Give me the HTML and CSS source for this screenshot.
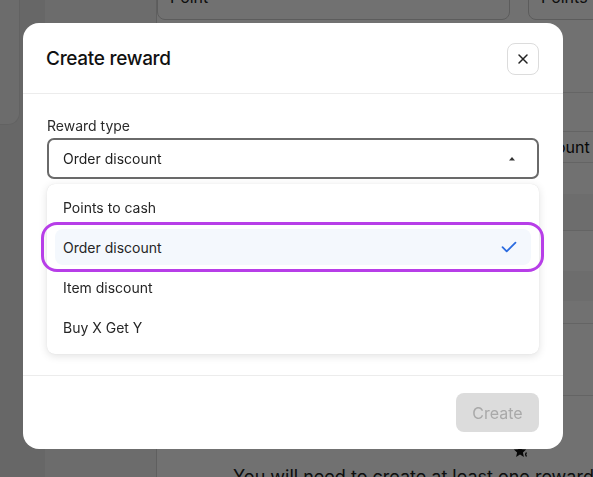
FILE: index.html
```html
<!DOCTYPE html>
<html lang="en">
<head>
<meta charset="utf-8">
<title>Create reward</title>
<link rel="stylesheet" href="styles.css">
</head>
<body>
<div class="page">
  <aside class="rail"><div class="rail-card"></div></aside>
  <nav class="side"></nav>
  <main class="main">
    <div class="fields">
      <div class="field field-wide">Point</div>
      <div class="field">Points</div>
    </div>
    <div class="table">
      <div class="row row-head"></div>
      <div class="row row-label"><span class="cell-text">Discount</span></div>
      <div class="row row-a"></div>
      <div class="row row-band row-b"></div>
      <div class="row row-c"></div>
      <div class="row row-band row-d"></div>
      <div class="row row-e"></div>
      <div class="row row-f"></div>
    </div>
    <div class="empty">
      <svg class="star" width="16" height="16" viewBox="0 0 16 16" aria-hidden="true">
        <path d="M7 1l1.8 4.2 4.4.4-3.3 2.9 1 4.4L7 10.6 3.1 12.9l1-4.4L.8 5.6l4.4-.4z" fill="#111"/>
        <path d="M13.5 8.5a3 3 0 0 0 0 4" fill="none" stroke="#111" stroke-width="1.2"/>
      </svg>
      <p class="empty-text">You will need to create at least one reward</p>
    </div>
  </main>
</div>

<div class="overlay">
  <div class="modal">
    <header class="modal-head">
      <h2 class="modal-title">Create reward</h2>
      <button class="close" type="button" aria-label="Close">
        <svg width="12" height="12" viewBox="0 0 12 12" aria-hidden="true">
          <path d="M2 2l8 8M10 2l-8 8" stroke="#222" stroke-width="1.5" stroke-linecap="round"/>
        </svg>
      </button>
    </header>
    <section class="modal-body">
      <label class="label">Reward type</label>
      <div class="select">
        <span>Order discount</span>
        <svg class="caret" width="8" height="5" viewBox="0 0 8 5" aria-hidden="true"><path d="M1 4.5L4 1l3 3.5z" fill="#333"/></svg>
      </div>
      <ul class="menu">
        <li class="item">Points to cash</li>
        <li class="item item-selected">Order discount
          <svg class="check" width="16" height="12" viewBox="0 0 16 12" aria-hidden="true"><path d="M1.5 6.2l4.2 4.2L14.5 1.6" fill="none" stroke="#2b6be0" stroke-width="1.8" stroke-linecap="round" stroke-linejoin="round"/></svg>
          <span class="highlight"></span>
        </li>
        <li class="item">Item discount</li>
        <li class="item">Buy X Get Y</li>
      </ul>
    </section>
    <footer class="modal-foot">
      <button class="create" type="button" disabled>Create</button>
    </footer>
  </div>
</div>
</body>
</html>
```

FILE: styles.css
```css
* { box-sizing: border-box; }
html, body { margin: 0; padding: 0; }
body {
  width: 593px;
  height: 477px;
  overflow: hidden;
  font-family: Inter, "Noto Sans", "Liberation Sans", sans-serif;
  background: #f2f2f2;
  color: #1f1f1f;
}

/* underlying page */
.page {
  display: grid;
  grid-template-columns: 45px 112px 1fr;
  width: 900px;
  height: 477px;
}
.rail { background: #e9e9e9; }
.rail-card {
  width: 20px;
  height: 125px;
  background: #f4f4f4;
  border-right: 1px solid #dedede;
  border-bottom: 1px solid #dedede;
  border-radius: 0 0 12px 0;
}
.side {
  background: #f3f3f3;
  border-right: 1px solid #d6d6d6;
}
.main {
  background: #ffffff;
  display: flex;
  flex-direction: column;
}
.fields {
  display: flex;
  gap: 18px;
  height: 20px;
  margin-top: -20px;
}
.field {
  flex: 0 0 200px;
  height: 40px;
  border: 1px solid #cfcfcf;
  border-radius: 8px;
  padding: 6px 12px;
  font-size: 16px;
  color: #222;
}
.field-wide { flex: 0 0 353px; }
.table {
  margin-top: 92px;
  border-top: 1px solid #e4e4e4;
  display: flex;
  flex-direction: column;
}
.row { border-bottom: 1px solid #e2e2e2; }
.row-head { height: 39px; }
.row-label {
  height: 31px;
  display: flex;
  align-items: center;
  padding-left: 366px;
  font-size: 16px;
  color: #111;
}
.row-a { height: 31px; border-bottom: none; }
.row-band { background: #f5f5f5; }
.row-b { height: 37px; }
.row-c { height: 40px; border-bottom: none; }
.row-d { height: 30px; border-bottom: none; }
.row-e { height: 23px; }
.row-f { height: 72px; }
.empty {
  display: flex;
  flex-direction: column;
  padding-left: 76px;
  margin-top: 48px;
}
.star { margin-left: 280px; display: block; }
.empty-text {
  margin: 6px 0 0;
  font-size: 18px;
  white-space: nowrap;
  color: #222;
}

/* overlay and modal */
.overlay {
  position: fixed;
  inset: 0;
  background: rgba(0, 0, 0, 0.555);
  padding: 23px 30px 28px 23px;
}
.modal {
  width: 540px;
  height: 426px;
  background: #fff;
  border-radius: 16px;
  display: flex;
  flex-direction: column;
}
.modal-head {
  height: 71px;
  display: flex;
  align-items: center;
  justify-content: space-between;
  padding: 0 24px;
  border-bottom: 1px solid #ececec;
}
.modal-title {
  margin: 0 0 0 -1px;
  font-size: 19px;
  font-weight: 500;
  color: #111;
  letter-spacing: -0.3px;
}
.close {
  width: 32px;
  height: 32px;
  border: 1px solid #dcdcdc;
  border-radius: 8px;
  background: #fff;
  display: flex;
  align-items: center;
  justify-content: center;
  padding: 0;
  margin-top: 1px;
}
.modal-body {
  flex: 1;
  padding: 23px 24px 0;
  border-bottom: 1px solid #ececec;
  display: flex;
  flex-direction: column;
}
.label {
  font-size: 14px;
  line-height: 17px;
  color: #2b2b2b;
  margin-bottom: 4px;
}
.select {
  height: 41px;
  border: 2px solid #6a6a6a;
  border-radius: 7px;
  display: flex;
  align-items: center;
  justify-content: space-between;
  padding: 0 21px 0 14px;
  font-size: 14px;
  color: #1f1f1f;
}
.caret { display: block; }
.menu {
  list-style: none;
  margin: 5px 0 0;
  padding: 5px 8px 9px;
  border-radius: 8px;
  background: #fff;
  box-shadow: 0 2px 8px rgba(0, 0, 0, 0.12), 0 0 1px rgba(0, 0, 0, 0.15);
  display: flex;
  flex-direction: column;
  gap: 4px;
}
.item {
  position: relative;
  height: 36px;
  display: flex;
  align-items: center;
  justify-content: space-between;
  padding: 0 14px 0 8px;
  font-size: 14px;
  color: #262626;
  border-radius: 8px;
}
.item-selected { background: #f4f8fd; }
.check { display: block; }
.highlight {
  position: absolute;
  left: -14px;
  right: -13px;
  top: -7px;
  bottom: -7px;
  border: 3px solid #b73ee8;
  border-radius: 16px;
  pointer-events: none;
}
.modal-foot {
  height: 73px;
  display: flex;
  align-items: center;
  justify-content: flex-end;
  padding: 0 24px;
}
.create {
  width: 83px;
  height: 39px;
  border: none;
  border-radius: 8px;
  background: #dcdcdc;
  color: #a9a9a9;
  font-family: inherit;
  font-size: 16px;
}
```
